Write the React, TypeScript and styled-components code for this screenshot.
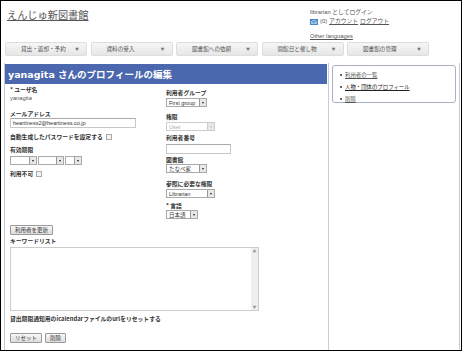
import styled, { createGlobalStyle } from "styled-components";

const GlobalStyle = createGlobalStyle`
    * {
        margin: 0;
        padding: 0;
        box-sizing: border-box;
    }
    body {
        background: #fff;
        font-family: "DejaVu Sans", "Noto Sans CJK JP", sans-serif;
        color: #333;
    }
`

const Frame = styled.div`
    width: 462px;
    height: 351px;
    border: 1px solid #000;
    overflow: hidden;
    display: flex;
    flex-direction: column;
`

const Header = styled.div`
    display: flex;
    justify-content: space-between;
    height: 41px;
    padding: 7px 0 0 6px;
`

const SiteTitle = styled.a`
    font-family: "Noto Sans CJK JP", sans-serif;
    font-size: 10.2px;
    color: #555;
    text-decoration: underline;
    line-height: 14px;
`

const UserBox = styled.div`
    width: 151px;
    font-size: 5.8px;
    line-height: 9px;
    color: #555;
    font-family: "Liberation Sans", "Noto Sans CJK JP", sans-serif;
`

const UserLine = styled.div<{ top?: string }>`
    display: flex;
    align-items: center;
    gap: 2px;
    margin-top: ${p => p.top || '0'};
`

const Link = styled.a`
    color: #555;
    text-decoration: underline;
`

const Nav = styled.div`
    display: flex;
    gap: 3.5px;
    padding-left: 4px;
    height: 15px;
`

const NavButton = styled.div`
    width: 82px;
    height: 14px;
    border: 1px solid #ddd;
    border-radius: 2px;
    background: linear-gradient(#f6f6f6, #e6e6e6);
    display: flex;
    align-items: center;
    justify-content: space-between;
    padding: 0 7px 0 15px;
    font-family: "Noto Sans CJK JP", sans-serif;
    font-size: 5.6px;
    color: #555;
    span:last-child {
        font-size: 4px;
        color: #777;
    }
`

const Columns = styled.div`
    display: flex;
    flex: 1;
    margin-top: 6px;
`

const Main = styled.div`
    width: 325px;
    margin-left: 3px;
    border-left: 1px solid #c9cbd6;
    border-right: 1px solid #c9cbd6;
    display: flex;
    flex-direction: column;
`

const TitleBar = styled.div`
    background: #4b67ad;
    color: #fff;
    font-weight: bold;
    font-size: 9.5px;
    height: 20px;
    padding: 3px 0 0 3px;
    margin: 1px 1px 0 0;
`

const Form = styled.div`
    padding: 2px 0 0 5px;
    font-size: 5.8px;
    font-family: "Noto Sans CJK JP", sans-serif;
    color: #333;
`

const Grid = styled.div`
    display: grid;
    grid-template-columns: 156px 140px;
`

const Col = styled.div<{ pt?: string }>`
    display: flex;
    flex-direction: column;
    align-items: flex-start;
    padding-top: ${p => p.pt || '0'};
`

const Label = styled.div<{ mt?: string }>`
    font-weight: bold;
    margin-top: ${p => p.mt || '0'};
    line-height: 8px;
    height: 8px;
    display: flex;
    align-items: center;
    gap: 3px;
    white-space: nowrap;
`

const Value = styled.div`
    color: #555;
    line-height: 8px;
    font-family: "Liberation Sans", sans-serif;
`

const TextInput = styled.div<{ w: string; mt?: string }>`
    width: ${p => p.w};
    height: 10px;
    margin-top: ${p => p.mt || '0'};
    border: 1px solid #c8c8c8;
    border-top-color: #aaa;
    font-size: 5.5px;
    line-height: 8px;
    padding-left: 2px;
    color: #333;
    font-family: "Liberation Sans", sans-serif;
    white-space: nowrap;
`

const Select = styled.div<{ w: string; mt?: string; disabled?: boolean }>`
    width: ${p => p.w};
    height: 9px;
    margin-top: ${p => p.mt || '0'};
    border: 1px solid ${p => p.disabled ? '#ccc' : '#a9a9a9'};
    display: flex;
    justify-content: space-between;
    align-items: center;
    font-size: 5.5px;
    font-family: "Liberation Sans", "Noto Sans CJK JP", sans-serif;
    color: ${p => p.disabled ? '#aaa' : '#333'};
    padding-left: 2px;
    background: #fff;
    white-space: nowrap;
`

const Arrow = styled.span<{ disabled?: boolean }>`
    width: 7px;
    height: 7px;
    border-left: 1px solid ${p => p.disabled ? '#ccc' : '#999'};
    background: #e8e8e8;
    display: flex;
    align-items: center;
    justify-content: center;
    flex-shrink: 0;
    &::before {
        content: "";
        border-left: 1.5px solid transparent;
        border-right: 1.5px solid transparent;
        border-top: 2px solid ${p => p.disabled ? '#bbb' : '#222'};
    }
`

const Row = styled.div`
    display: flex;
    gap: 1px;
    margin-top: 2px;
`

const Check = styled.span`
    width: 6px;
    height: 6px;
    border: 1px solid #aaa;
    background: #f4f4f4;
    display: inline-block;
`

const Button = styled.div<{ mt?: string }>`
    display: inline-flex;
    align-items: center;
    height: 10px;
    padding: 0 4px;
    border: 1px solid #999;
    border-radius: 1px;
    background: linear-gradient(#f8f8f8, #dcdcdc);
    font-size: 5.5px;
    color: #333;
    margin-top: ${p => p.mt || '0'};
`

const TextArea = styled.div`
    width: 249px;
    height: 64px;
    border: 1px solid #ccc;
    margin-top: 2px;
    display: flex;
    justify-content: flex-end;
`

const ScrollBar = styled.div`
    width: 7px;
    background: #efefef;
    display: flex;
    flex-direction: column;
    justify-content: space-between;
    align-items: center;
    font-size: 4px;
    color: #999;
`

const Side = styled.div`
    width: 131px;
    border-right: 1px solid #c9cbd6;
    padding: 2px 3px 0 3px;
`

const SideBox = styled.div`
    border: 1px solid #a9b0c6;
    border-radius: 3px;
    padding: 3px 0 2px 7px;
    height: 38px;
    font-family: "Noto Sans CJK JP", sans-serif;
    font-size: 5.4px;
`

const SideList = styled.ul`
    list-style: none;
`

const SideItem = styled.li<{ dark?: boolean }>`
    line-height: 12px;
    display: flex;
    align-items: center;
    gap: 3px;
    a {
        color: ${p => p.dark ? '#222' : '#555'};
        text-decoration: underline;
    }
    &::before {
        content: "";
        width: 2px;
        height: 2px;
        border-radius: 50%;
        background: #333;
    }
`

const ButtonRow = styled.div`
    display: flex;
    gap: 3px;
    margin-top: 10px;
`

const MailIcon = () => (
    <svg width="8" height="6" viewBox="0 0 8 6">
        <rect x="0.5" y="0.5" width="7" height="5" fill="#9cc4ea" stroke="#4c86c6" strokeWidth="1" />
        <path d="M0.5 0.5 L4 3.5 L7.5 0.5" fill="none" stroke="#2f6aaa" strokeWidth="0.8" />
    </svg>
)

const navItems = ['貸出・返却・予約', '資料の受入', '図書館への依頼', '開館日と催し物', '図書館の管理']

export default function App() {
    return (
        <>
            <GlobalStyle />
            <Frame>
                <Header>
                    <SiteTitle>えんじゅ新図書館</SiteTitle>
                    <UserBox>
                        <div>librarian としてログイン</div>
                        <UserLine>
                            <MailIcon />
                            <span>(0)</span>
                            <Link>アカウント</Link>
                            <Link>ログアウト</Link>
                        </UserLine>
                        <UserLine top="6px">
                            <Link>Other languages</Link>
                        </UserLine>
                    </UserBox>
                </Header>
                <Nav>
                    {navItems.map(n => (
                        <NavButton key={n}>
                            <span>{n}</span>
                            <span>▼</span>
                        </NavButton>
                    ))}
                </Nav>
                <Columns>
                    <Main>
                        <TitleBar>yanagita さんのプロフィールの編集</TitleBar>
                        <Form>
                            <Grid>
                                <Col>
                                    <Label>* ユーザ名</Label>
                                    <Value>yanagita</Value>
                                    <Label mt="8px">メールアドレス</Label>
                                    <TextInput w="126px">heartiness2@heartiness.co.jp</TextInput>
                                    <Label mt="5px">自動生成したパスワードを設定する <Check /></Label>
                                    <Label mt="5px">有効期限</Label>
                                    <Row>
                                        <Select w="27px"><span /><Arrow /></Select>
                                        <Select w="26px"><span /><Arrow /></Select>
                                        <Select w="17px"><span /><Arrow /></Select>
                                    </Row>
                                    <Label mt="5px">利用不可 <Check /></Label>
                                </Col>
                                <Col pt="3px">
                                    <Label>利用者グループ</Label>
                                    <Select w="41px" mt="1px">First group<Arrow /></Select>
                                    <Label mt="6px">権限</Label>
                                    <Select w="49px" mt="1px" disabled>User<Arrow disabled /></Select>
                                    <Label mt="3px">利用者番号</Label>
                                    <TextInput w="65px" mt="2px" />
                                    <Label mt="2px">図書館</Label>
                                    <Select w="41px">たなべ家<Arrow /></Select>
                                    <Label mt="7px">参照に必要な権限</Label>
                                    <Select w="49px" mt="1px">Librarian<Arrow /></Select>
                                    <Label mt="4px">* 言語</Label>
                                    <Select w="32px">日本語<Arrow /></Select>
                                </Col>
                            </Grid>
                            <Button mt="6px">利用者を更新</Button>
                            <Label mt="2px">キーワードリスト</Label>
                            <TextArea>
                                <ScrollBar><span>▲</span><span>▼</span></ScrollBar>
                            </TextArea>
                            <Label mt="4px">貸出期限通知用のicalendarファイルのurlをリセットする</Label>
                            <ButtonRow>
                                <Button>リセット</Button>
                                <Button>削除</Button>
                            </ButtonRow>
                        </Form>
                    </Main>
                    <Side>
                        <SideBox>
                            <SideList>
                                <SideItem><a>利用者の一覧</a></SideItem>
                                <SideItem dark><a>人物・団体のプロフィール</a></SideItem>
                                <SideItem><a>削除</a></SideItem>
                            </SideList>
                        </SideBox>
                    </Side>
                </Columns>
            </Frame>
        </>
    )
}
